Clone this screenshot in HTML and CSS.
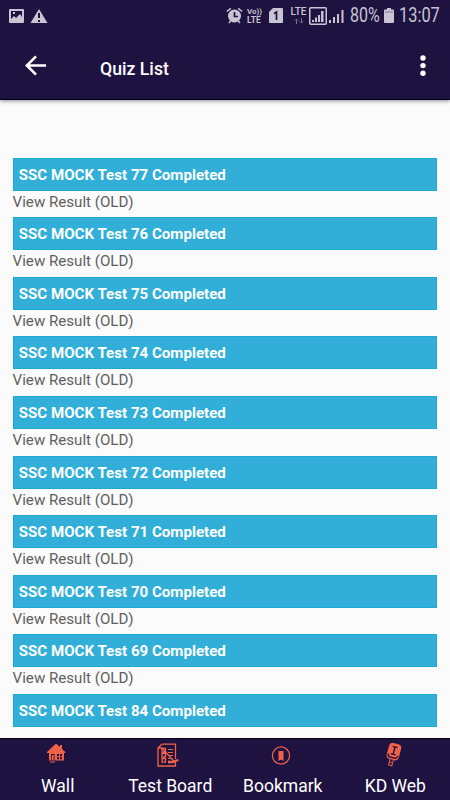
FILE: index.html
```html
<!DOCTYPE html>
<html lang="en">
<head>
<meta charset="utf-8">
<title>Quiz List</title>
<link rel="stylesheet" href="styles.css">
</head>
<body>
<div class="screen">
  <header class="header">
    <div class="status">
      <svg class="notices" width="40" height="16" viewBox="0 0 40 16"><path fill-rule="evenodd" d="M1 1h13q1 0 1 1v12q0 1-1 1H1q-1 0-1-1V2q0-1 1-1zm1 2v8l3-3 2 2 4-4 2 3V3zm2 1h2v2H4zM30 1l8.500 14h-17zM29 5v5h2V5zm0 7v2h2v-2z"/></svg>
      <svg class="alarm" width="17" height="17" viewBox="0 0 17 17"><circle cx="8.500" cy="9" r="6.500"/><path class="line" d="M.8 4.500l4-3.200M12.200 1.300l4 3.200M4.500 14L3 16M12.500 14l1.500 2"/><path class="cut" d="M8.500 5v4.500H12"/></svg>
      <div class="volte"><span>Vo))</span><span class="wide">LTE</span></div>
      <svg class="sim" width="14" height="15" viewBox="0 0 14 15"><path d="M4 0h9q1 0 1 1v13q0 1-1 1H1q-1 0-1-1V4z"/><path class="cut" d="M5 5.500l2.500-1.500v8"/></svg>
      <div class="lte"><span>LTE</span><svg width="10" height="6" viewBox="0 0 10 6"><path class="faint" d="M2.500 6V1M1 2.500L2.500 1 4 2.500M7.500 0v5M6 3.500L7.500 5 9 3.500"/></svg></div>
      <svg class="signal" width="37" height="18" viewBox="0 0 37 18"><rect class="line" x=".75" y=".75" width="16.500" height="16.500" rx="1"/><path d="M3 13h2v2H3zM6 10.500h2V15H6zM9 8h2v7H9zM12 4h2.500v11H12zM20 13h2v3h-2zM24 10h2v6h-2zM28 7h2v9h-2zM32.500 3h2v13h-2z"/></svg>
      <span class="percent">80%</span>
      <svg class="battery" width="10" height="15" viewBox="0 0 10 15"><path d="M3 0h4v1.500h2q1 0 1 1V14q0 1-1 1H1q-1 0-1-1V2.500q0-1 1-1h2z"/><path class="level" d="M1 3.500h8v1.200H1z"/></svg>
      <span class="clock">13:07</span>
    </div>
    <div class="toolbar">
      <svg class="back" width="22" height="22" viewBox="0 0 22 22"><path d="M21 10.500H2.500M11 1.300L1.800 10.500l9.200 9.200"/></svg>
      <h1>Quiz List</h1>
      <svg class="more" width="6" height="22" viewBox="0 0 6 22"><circle cx="3" cy="3" r="2.700"/><circle cx="3" cy="10.600" r="2.700"/><circle cx="3" cy="18.200" r="2.700"/></svg>
    </div>
  </header>
  <main class="list">
    <section><h2>SSC MOCK Test 77 Completed</h2><p>View Result (OLD)</p></section>
    <section><h2>SSC MOCK Test 76 Completed</h2><p>View Result (OLD)</p></section>
    <section><h2>SSC MOCK Test 75 Completed</h2><p>View Result (OLD)</p></section>
    <section><h2>SSC MOCK Test 74 Completed</h2><p>View Result (OLD)</p></section>
    <section><h2>SSC MOCK Test 73 Completed</h2><p>View Result (OLD)</p></section>
    <section><h2>SSC MOCK Test 72 Completed</h2><p>View Result (OLD)</p></section>
    <section><h2>SSC MOCK Test 71 Completed</h2><p>View Result (OLD)</p></section>
    <section><h2>SSC MOCK Test 70 Completed</h2><p>View Result (OLD)</p></section>
    <section><h2>SSC MOCK Test 69 Completed</h2><p>View Result (OLD)</p></section>
    <section><h2>SSC MOCK Test 84 Completed</h2></section>
  </main>
  <nav class="tabs">
    <a><svg width="24" height="24" viewBox="0 0 24 24"><path class="fill" fill-rule="evenodd" d="M12 .5l4 3.500V2h2v4l3.300 3v1H20v7.500H5V10H3V9zM7 11v6.500h3.500V11zM13 11v2.200h2V11zm3 0v2.200h2V11zm-3 3.200v2h2v-2zm3 0v2h2v-2z"/><path class="fill" d="M7.700 12h2v5.500h-2zM6 18.500h5v1H6z"/></svg><span>Wall</span></a>
    <a><svg width="24" height="24" viewBox="0 0 24 24"><path d="M5 1.200h13.500V16M18.500 20v3H1V5h4zM4.800 1.200L1 5"/><path d="M5 5.500h3.500v3.500H5zM5 10.500h3.500V14H5zM5 15.700h3.500v3.500H5z"/><path class="thin" d="M11 6.500h5M11 9.500h5M11 12.500h5M11 15.500h4"/><path class="fill" d="M11 17.500l4 .500 6-2 1 1.500-5 2.500-6 .500z"/></svg><span>Test Board</span></a>
    <a><svg width="24" height="24" viewBox="0 0 24 24"><circle cx="12" cy="12.500" r="8.600"/><path class="fill" d="M9.500 8h5v10L12 16.500 9.500 18z"/></svg><span>Bookmark</span></a>
    <a><svg width="24" height="24" viewBox="0 0 24 24"><g transform="rotate(15 12 12)"><rect class="fill" x="4.800" y=".500" width="12.500" height="16.500" rx="4"/><path class="dark" d="M8.500 4h5M11 4v7.500M8.500 11.500h5M6 12q.5 3 3 3h4q2.500 0 3-3"/><path class="thin" d="M9.300 17v6h3.400v-6M11 19v2"/></g></svg><span>KD Web</span></a>
  </nav>
</div>
</body>
</html>
```
FILE: styles.css
```css
* { box-sizing: border-box; }
body { margin: 0; font-family: Roboto, sans-serif; }
.screen { width: 450px; height: 800px; display: flex; flex-direction: column; background: #fbfbfb; overflow: hidden; }
svg { display: block; flex: none; }

.header { flex: none; height: 100px; background: #1e1241; border-bottom: 1px solid #080020; box-shadow: 0 1px 4px rgba(0, 0, 0, .45); color: #fff; }
.status { height: 31px; display: flex; align-items: center; padding: 0 0 0 9px; color: #c8c4d2; white-space: nowrap; }
.status > * { flex: none; }
.status svg { fill: #c8c4d2; }
.status .line { fill: none; stroke: #c8c4d2; stroke-width: 1.5; }
.status .cut { fill: none; stroke: #1e1241; stroke-width: 1.7; }
.status .faint { fill: none; stroke: #77708c; stroke-width: 1; }
.status .level { fill: #8d879e; }
.alarm { margin-left: 177px; }
.volte { width: 16px; margin-left: 4px; display: flex; flex-direction: column; font: 700 8px/8px Roboto, sans-serif; }
.volte .wide { font-size: 8.5px; }
.sim { margin-left: 6px; }
.lte { width: 17px; margin-left: 7px; display: flex; flex-direction: column; align-items: center; gap: 2px; font: 500 10px/9px Roboto, sans-serif; }
.signal { margin-left: 2px; }
.percent { width: 31px; margin-left: 4px; font-size: 19.5px; transform: scaleX(.82); transform-origin: left; }
.battery { margin-left: 3px; }
.clock { margin-left: 5px; font-size: 19.5px; transform: scaleX(.84); transform-origin: left; }

.toolbar { height: 69px; display: flex; align-items: center; padding: 0 24.5px; }
.back { fill: none; stroke: #fff; stroke-width: 2.6; }
.toolbar h1 { flex: 1; margin: 7px 0 0 53.5px; font-size: 17.7px; line-height: 22px; font-weight: 500; }
.more { fill: #fff; }

.list { flex: 1; min-height: 0; padding: 57.7px 12.6px 0 12.6px; }
.list section { height: 59.6px; }
.list h2 { height: 33px; margin: 0; padding: 1px 5.2px 0; border: 1px solid #1ca9d2; background: #31afd8; color: #fff; font-size: 15.1px; line-height: 31.4px; font-weight: 700; }
.list p { margin: 0; color: #606060; font-size: 15.1px; line-height: 22.6px; }

.tabs { flex: none; height: 62px; display: grid; grid-template-columns: repeat(4, 1fr); background: #1e1241; border-top: 1px solid #080020; color: #fff; }
.tabs a { display: flex; flex-direction: column; align-items: center; padding-top: 4px; font-size: 17.5px; line-height: 22px; white-space: nowrap; }
.tabs a span { margin: 8px -1px 0 2px; }
.tabs svg { fill: none; stroke: #ef6248; stroke-width: 1.3; }
.tabs .thin { stroke-width: 1; }
.tabs .fill { fill: #ef6248; stroke: none; }
.tabs .dark { stroke: #1e1241; }
```
